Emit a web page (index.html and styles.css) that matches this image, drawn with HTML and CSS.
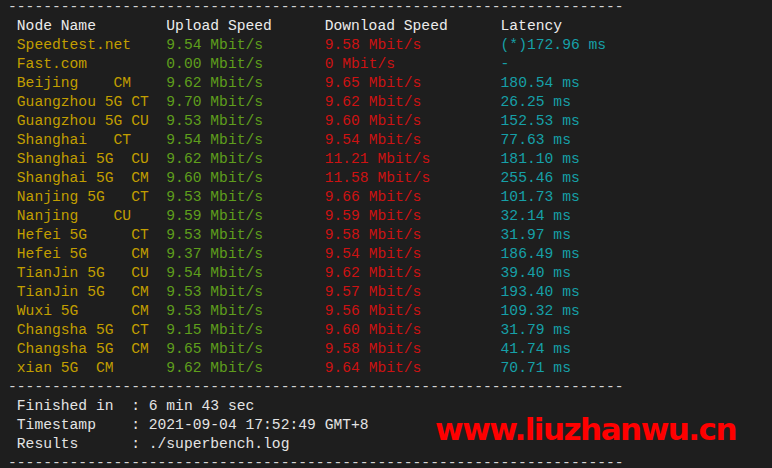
FILE: index.html
```html
<!DOCTYPE html>
<html>
<head>
  <meta charset="utf-8">
  <link rel="stylesheet" href="styles.css">
</head>
<body>
  <div class="terminal">
<pre class="output"><span class="line">----------------------------------------------------------------------</span>
<span class="head"> Node Name        Upload Speed      Download Speed      Latency     </span>
<span class="node"> Speedtest.net    </span><span class="up">9.54 Mbit/s       </span><span class="down">9.58 Mbit/s         </span><span class="lat">(*)172.96 ms</span>
<span class="node"> Fast.com         </span><span class="up">0.00 Mbit/s       </span><span class="down">0 Mbit/s            </span><span class="lat">-</span>
<span class="node"> Beijing    CM    </span><span class="up">9.62 Mbit/s       </span><span class="down">9.65 Mbit/s         </span><span class="lat">180.54 ms</span>
<span class="node"> Guangzhou 5G CT  </span><span class="up">9.70 Mbit/s       </span><span class="down">9.62 Mbit/s         </span><span class="lat">26.25 ms</span>
<span class="node"> Guangzhou 5G CU  </span><span class="up">9.53 Mbit/s       </span><span class="down">9.60 Mbit/s         </span><span class="lat">152.53 ms</span>
<span class="node"> Shanghai   CT    </span><span class="up">9.54 Mbit/s       </span><span class="down">9.54 Mbit/s         </span><span class="lat">77.63 ms</span>
<span class="node"> Shanghai 5G  CU  </span><span class="up">9.62 Mbit/s       </span><span class="down">11.21 Mbit/s        </span><span class="lat">181.10 ms</span>
<span class="node"> Shanghai 5G  CM  </span><span class="up">9.60 Mbit/s       </span><span class="down">11.58 Mbit/s        </span><span class="lat">255.46 ms</span>
<span class="node"> Nanjing 5G   CT  </span><span class="up">9.53 Mbit/s       </span><span class="down">9.66 Mbit/s         </span><span class="lat">101.73 ms</span>
<span class="node"> Nanjing    CU    </span><span class="up">9.59 Mbit/s       </span><span class="down">9.59 Mbit/s         </span><span class="lat">32.14 ms</span>
<span class="node"> Hefei 5G     CT  </span><span class="up">9.53 Mbit/s       </span><span class="down">9.58 Mbit/s         </span><span class="lat">31.97 ms</span>
<span class="node"> Hefei 5G     CM  </span><span class="up">9.37 Mbit/s       </span><span class="down">9.54 Mbit/s         </span><span class="lat">186.49 ms</span>
<span class="node"> TianJin 5G   CU  </span><span class="up">9.54 Mbit/s       </span><span class="down">9.62 Mbit/s         </span><span class="lat">39.40 ms</span>
<span class="node"> TianJin 5G   CM  </span><span class="up">9.53 Mbit/s       </span><span class="down">9.57 Mbit/s         </span><span class="lat">193.40 ms</span>
<span class="node"> Wuxi 5G      CM  </span><span class="up">9.53 Mbit/s       </span><span class="down">9.56 Mbit/s         </span><span class="lat">109.32 ms</span>
<span class="node"> Changsha 5G  CT  </span><span class="up">9.15 Mbit/s       </span><span class="down">9.60 Mbit/s         </span><span class="lat">31.79 ms</span>
<span class="node"> Changsha 5G  CM  </span><span class="up">9.65 Mbit/s       </span><span class="down">9.58 Mbit/s         </span><span class="lat">41.74 ms</span>
<span class="node"> xian 5G  CM      </span><span class="up">9.62 Mbit/s       </span><span class="down">9.64 Mbit/s         </span><span class="lat">70.71 ms</span>
<span class="line">----------------------------------------------------------------------</span>
<span class="info"> Finished in  : 6 min 43 sec</span>
<span class="info"> Timestamp    : 2021-09-04 17:52:49 GMT+8</span>
<span class="info"> Results      : ./superbench.log</span>
<span class="line">----------------------------------------------------------------------</span></pre>
    <div class="watermark">www.liuzhanwu.cn</div>
  </div>
</body>
</html>
```

FILE: styles.css
```css
html, body {
  margin: 0;
  padding: 0;
  background: #1e1e1e;
  height: 100%;
  overflow: hidden;
}

.terminal {
  position: relative;
  padding-left: 8px;
  height: 100%;
}

.output {
  margin: -2px 0 0 0;
  font-family: 'Liberation Mono', 'DejaVu Sans Mono', monospace;
  font-size: 14.67px;
  line-height: 19px;
  color: #cccccc;
}

.line {
  color: #d4d4d4;
}

.head {
  color: #ececec;
}

.node {
  color: #c29e00;
}

.up {
  color: #5f9e1c;
}

.down {
  color: #cd1212;
}

.lat {
  color: #16a0a8;
}

.info {
  color: #e4e4e4;
}

/* site watermark stamped over the screenshot */
.watermark {
  position: absolute;
  left: 435px;
  top: 413px;
  font-family: 'DejaVu Sans', sans-serif;
  font-weight: bold;
  font-size: 31px;
  letter-spacing: -1.5px;
  color: #ff0000;
}
```
